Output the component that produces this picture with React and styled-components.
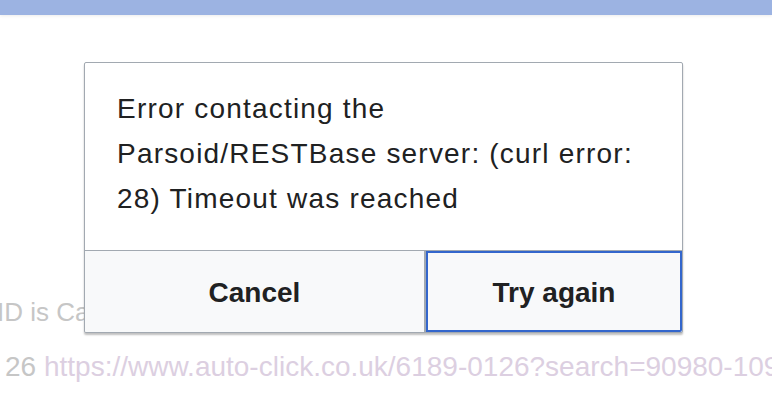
import React from "react";
import styled, { createGlobalStyle } from "styled-components";

const GlobalStyle = createGlobalStyle`
  html, body {
    margin: 0;
    padding: 0;
    background: #ffffff;
    overflow: hidden;
  }
  body {
    font-family: 'Liberation Sans', Arial, sans-serif;
  }
`;

const Page = styled.div`
  position: relative;
  width: 772px;
  height: 402px;
  overflow: hidden;
  background: #ffffff;
`;

const TopBar = styled.div`
  height: 15px;
  background: #9cb3e2;
  box-shadow: 0 1px 3px rgba(0, 0, 0, 0.08);
`;

const Backdrop = styled.div`
  padding-top: 277px;
  white-space: nowrap;
`;

const FadedLine = styled.p`
  margin: ${(p) => p.$margin || "0"};
  font-size: ${(p) => p.$size}px;
  line-height: 1.6;
  color: #c6c6c6;
`;

const FadedLink = styled.span`
  color: #dccfe1;
`;

const Dialog = styled.div`
  position: absolute;
  top: 62px;
  left: 84px;
  width: 599px;
  box-sizing: border-box;
  border: 1px solid #a2a9b1;
  border-radius: 2px;
  background: #ffffff;
  box-shadow: 0 2px 2px 0 rgba(0, 0, 0, 0.25);
  color: #202122;
`;

const Message = styled.div`
  padding: 24px 32px 29px;
  font-size: 28px;
  line-height: 1.6;
  letter-spacing: 1.2px;
`;

const Actions = styled.div`
  display: flex;
  height: 81px;
  border-top: 1px solid #a2a9b1;
`;

const ActionButton = styled.button`
  flex: ${(p) => (p.$primary ? "1 1 auto" : "0 0 341px")};
  display: flex;
  align-items: center;
  justify-content: center;
  margin: 0;
  padding: 2px 0 0;
  box-sizing: border-box;
  background: #f8f9fa;
  font-family: 'Liberation Sans', Arial, sans-serif;
  font-size: 28px;
  font-weight: bold;
  color: #202122;
  cursor: pointer;
  border: none;
  border-right: 2px solid #a2a9b1;
  border-radius: 0 0 0 2px;
  ${(p) =>
    p.$primary &&
    `
    border: 2px solid #3366cc;
    border-radius: 0 0 2px 0;
  `}
`;

export default function App() {
  return (
    <Page>
      <GlobalStyle />
      <TopBar />
      <Backdrop>
        <FadedLine $size={26} $margin="0 0 0 -3px">
          ID is Cancelled
        </FadedLine>
        <FadedLine $size={28} $margin="11px 0 0 5px">
          26 <FadedLink>https://www.auto-click.co.uk/6189-0126?search=90980-10920</FadedLink>
        </FadedLine>
      </Backdrop>
      <Dialog role="dialog">
        <Message>
          Error contacting the
          <br />
          Parsoid/RESTBase server: (curl error: 28) Timeout was reached
        </Message>
        <Actions>
          <ActionButton>Cancel</ActionButton>
          <ActionButton $primary>Try again</ActionButton>
        </Actions>
      </Dialog>
    </Page>
  );
}
